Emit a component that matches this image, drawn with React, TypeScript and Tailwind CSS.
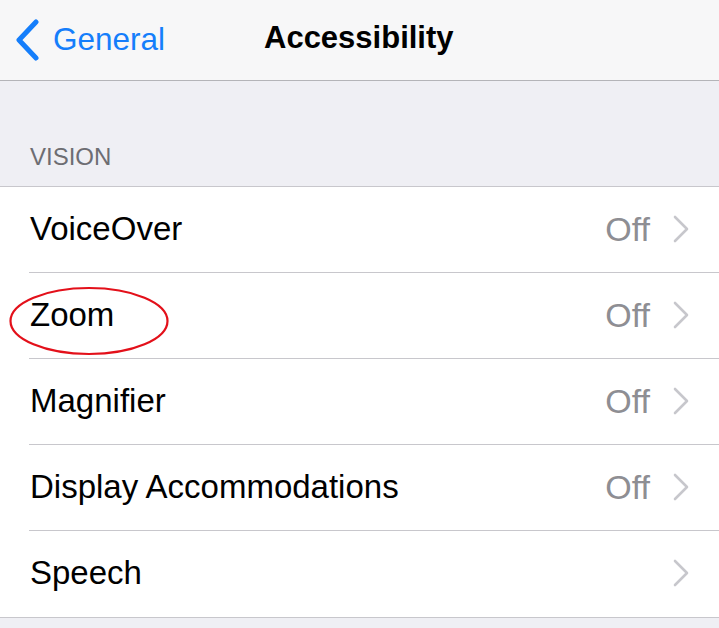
const rows = [
  { label: "VoiceOver", value: "Off" },
  { label: "Zoom", value: "Off", circled: true },
  { label: "Magnifier", value: "Off" },
  { label: "Display Accommodations", value: "Off" },
  { label: "Speech", value: "" },
];

function Chevron() {
  return (
    <svg width="18" height="28" viewBox="0 0 18 28" fill="none" className="text-[#c7c7cc]">
      <path d="M3 2l12 12L3 26" stroke="currentColor" strokeWidth="2.6" strokeLinecap="round" strokeLinejoin="round" />
    </svg>
  );
}

export default function App() {
  return (
    <div
      className="h-[628px] w-[719px] overflow-hidden bg-[#efeff4]"
      style={{ fontFamily: '"Liberation Sans", Arial, sans-serif' }}
    >
      {/* nav bar */}
      <div className="relative flex h-[81px] items-center border-b border-[#b4b4b8] bg-[#f7f7f8]">
        <div className="flex items-center pl-[14px] text-[#157efb]">
          <svg width="28" height="42" viewBox="0 0 28 42" fill="none">
            <path
              d="M22 3L5 21l17 18"
              stroke="currentColor"
              strokeWidth="5"
              strokeLinecap="round"
              strokeLinejoin="round"
            />
          </svg>
          <span className="ml-[11px] text-[31.5px] leading-none">General</span>
        </div>
        <div className="absolute left-[264px] top-[22px] text-[31px] font-bold leading-none text-black">
          Accessibility
        </div>
      </div>

      {/* section header */}
      <div className="flex h-[105px] items-end pb-[17px] pl-[30px] text-[24px] leading-none text-[#6d6d72]">
        VISION
      </div>

      {/* list */}
      <div className="border-y border-[#c8c7cc] bg-white">
        {rows.map((r, i) => (
          <div key={r.label} className="relative flex h-[86px] items-center">
            <div className="flex flex-1 items-center pb-[3px] pl-[30px] pr-[29px]">
              <span className="flex-1 text-[33px] leading-none text-black">{r.label}</span>
              {r.value && (
                <span className="mr-[22px] text-[34px] leading-none text-[#8e8e93]">{r.value}</span>
              )}
              <Chevron />
            </div>
            {i < rows.length - 1 && (
              <div className="absolute bottom-0 left-[29px] right-0 h-px bg-[#c8c7cc]" />
            )}
            {r.circled && (
              <svg className="absolute left-[9px] top-[13px]" width="162" height="70" viewBox="0 0 162 70">
                <ellipse cx="80" cy="35" rx="78.5" ry="33" fill="none" stroke="#e3101a" strokeWidth="2.2" />
              </svg>
            )}
          </div>
        ))}
      </div>
    </div>
  );
}
